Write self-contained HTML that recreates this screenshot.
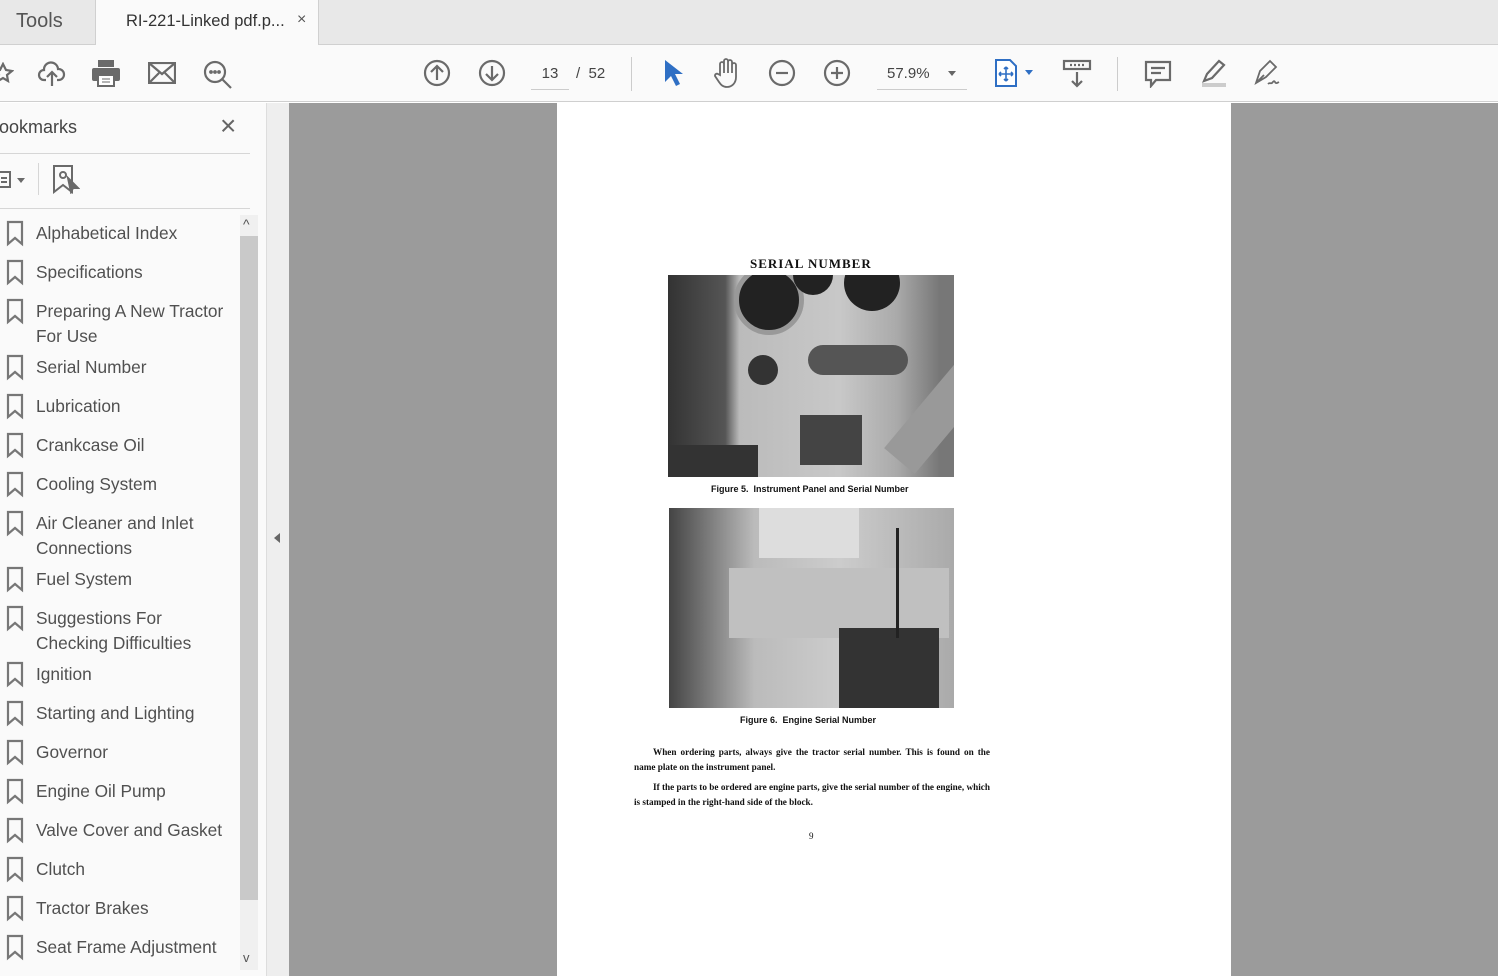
<!DOCTYPE html>
<html><head><meta charset="utf-8"><style>
*{margin:0;padding:0;box-sizing:border-box}
body{width:1498px;height:976px;overflow:hidden;position:relative;font-family:"Liberation Sans",sans-serif;background:#fff}
.abs{position:absolute}
#tabs{left:0;top:0;width:1498px;height:45px;background:#e8e8e8;border-bottom:1px solid #d0d0d0}
#toolbar{left:0;top:45px;width:1498px;height:57px;background:#fafafa;border-bottom:1px solid #cfcfcf}
.ic{position:absolute;fill:none;stroke:#6a6a6a;stroke-width:2.2}
.bm{position:absolute;left:36px;font-size:17.3px;color:#505050;line-height:25px}
</style></head><body>
<div id="tabs" class="abs">
 <div class="abs" style="left:16px;top:10px;font-size:20px;color:#555">Tools</div>
 <div class="abs" style="left:95px;top:0;width:224px;height:46px;background:#fafafa;border-left:1px solid #d0d0d0;border-right:1px solid #d0d0d0"></div>
 <div class="abs" style="left:126px;top:12px;font-size:16.5px;color:#333">RI-221-Linked pdf.p...</div>
 <div class="abs" style="left:297px;top:11px;font-size:16px;color:#555">×</div>
</div>
<div id="toolbar" class="abs">
 <svg class="ic" style="left:-8px;top:17px" width="22" height="22" viewBox="0 0 22 22"><path d="M11 2l3 6 6 1-5 4 1 6-5-3-5 3 1-6-5-4 6-1z"/></svg>
 <svg class="ic" style="left:37px;top:14px" width="30" height="30" viewBox="0 0 30 30"><path d="M9 21H7a5 5 0 0 1 0-10 7 7 0 0 1 14-1 5 5 0 0 1 1 11h-2M15 27V14M10 18l5-5 5 5"/></svg>
 <svg style="position:absolute;left:91px;top:14px" width="30" height="28" viewBox="0 0 30 28"><rect x="7" y="1" width="16" height="7" fill="#6a6a6a"/><rect x="1" y="9" width="28" height="13" rx="2" fill="#6a6a6a"/><rect x="7" y="16" width="16" height="11" fill="#fff" stroke="#6a6a6a" stroke-width="2"/><path d="M11 20h8M11 23h8" stroke="#6a6a6a"/></svg>
 <svg class="ic" style="left:148px;top:17px" width="28" height="22" viewBox="0 0 28 22"><rect x="1" y="1" width="26" height="20"/><path d="M1 1l13 11L27 1M1 21l10-10M27 21L17 11"/></svg>
 <svg class="ic" style="left:202px;top:14px" width="32" height="32" viewBox="0 0 32 32"><circle cx="13" cy="13" r="10"/><path d="M20 20l9 9"/><circle cx="9" cy="13" r=".8" fill="#6a6a6a"/><circle cx="13" cy="13" r=".8" fill="#6a6a6a"/><circle cx="17" cy="13" r=".8" fill="#6a6a6a"/></svg>
 <svg class="ic" style="left:423px;top:14px" width="28" height="28" viewBox="0 0 28 28"><circle cx="14" cy="14" r="12"/><path d="M14 21V7M8 13l6-6 6 6"/></svg>
 <svg class="ic" style="left:478px;top:14px" width="28" height="28" viewBox="0 0 28 28"><circle cx="14" cy="14" r="12"/><path d="M14 7v14M8 15l6 6 6-6"/></svg>
 <div class="abs" style="left:531px;top:20px;width:38px;text-align:center;font-size:15px;color:#444">13</div>
 <div class="abs" style="left:531px;top:44px;width:38px;height:1px;background:#ccc"></div>
 <div class="abs" style="left:576px;top:20px;font-size:15px;color:#444">/ &nbsp;52</div>
 <div class="abs" style="left:631px;top:12px;width:1px;height:34px;background:#ccc"></div>
 <svg style="position:absolute;left:663px;top:13px" width="20" height="30" viewBox="0 0 20 30"><path d="M2 2v22l6-6 5 10 4-2-5-10h8z" fill="#2f6fc4"/></svg>
 <svg class="ic" style="left:712px;top:12px;stroke-width:1.8" width="30" height="32" viewBox="0 0 30 32"><path d="M8 18V7a2 2 0 0 1 4 0v9V4a2 2 0 0 1 4 0v12V5a2 2 0 0 1 4 0v11V8a2 2 0 0 1 4 0v12c0 6-4 10-9 10-4 0-6-2-8-5l-4-6a2 2 0 0 1 3-2z"/></svg>
 <svg class="ic" style="left:768px;top:14px" width="28" height="28" viewBox="0 0 28 28"><circle cx="14" cy="14" r="12"/><path d="M8 14h12"/></svg>
 <svg class="ic" style="left:823px;top:14px" width="28" height="28" viewBox="0 0 28 28"><circle cx="14" cy="14" r="12"/><path d="M8 14h12M14 8v12"/></svg>
 <div class="abs" style="left:887px;top:20px;font-size:15px;color:#444">57.9%</div>
 <div class="abs" style="left:948px;top:26px;border:4px solid transparent;border-top:5px solid #666"></div>
 <div class="abs" style="left:877px;top:44px;width:90px;height:1px;background:#ccc"></div>
 <svg style="position:absolute;left:994px;top:13px" width="40" height="30" viewBox="0 0 40 30"><path d="M2 2h14l6 6v20H2z" fill="#fff" stroke="#2f6fc4" stroke-width="2"/><path d="M12 9v14M5 16h14M12 9l-2 2M12 9l2 2M12 23l-2-2M12 23l2-2M5 16l2-2M5 16l2 2M19 16l-2-2M19 16l-2 2" stroke="#2f6fc4" stroke-width="1.6" fill="none"/><path d="M31 12h8l-4 5z" fill="#2f6fc4"/></svg>
 <svg class="ic" style="left:1062px;top:14px" width="30" height="30" viewBox="0 0 30 30"><rect x="2" y="2" width="26" height="8"/><path d="M15 13v14M10 22l5 5 5-5"/><path d="M8 6h14" stroke-dasharray="2 2"/></svg>
 <div class="abs" style="left:1117px;top:12px;width:1px;height:34px;background:#ccc"></div>
 <svg class="ic" style="left:1144px;top:15px" width="28" height="28" viewBox="0 0 28 28"><path d="M2 2h24v18H12l-5 6v-6H2z"/><path d="M7 8h14M7 13h10"/></svg>
 <svg class="ic" style="left:1198px;top:12px" width="32" height="32" viewBox="0 0 32 32"><path d="M6 24l3-7 12-13 5 4-12 13z"/><path d="M4 28h24" stroke="#ccc" stroke-width="4"/></svg>
 <svg class="ic" style="left:1252px;top:12px;stroke-width:1.8" width="32" height="32" viewBox="0 0 32 32"><path d="M4 26l4-12 10-10 6 6-10 10zM4 26l8-8M16 27c2-2 3 0 4-1s2-3 3-1 2 1 4 0"/></svg>
</div>
<div class="abs" style="left:0;top:103px;width:266px;height:873px;background:#fafafa"></div>
<div class="abs" style="left:-1px;top:117px;font-size:18px;color:#444">ookmarks</div>
<div class="abs" style="left:220px;top:110px;font-size:28px;color:#666">×</div>
<div class="abs" style="left:0;top:153px;width:250px;height:1px;background:#d6d6d6"></div>
<svg class="ic" style="left:-2px;top:170px;stroke-width:2" width="32" height="20" viewBox="0 0 32 20"><rect x="0" y="2" width="12" height="15"/><path d="M3 8h6M3 12h6"/><path d="M19 8h8l-4 5z" fill="#6a6a6a" stroke="none"/></svg>
<div class="abs" style="left:38px;top:163px;width:1px;height:32px;background:#d6d6d6"></div>
<svg class="ic" style="left:52px;top:164px;stroke-width:2" width="28" height="30" viewBox="0 0 28 30"><path d="M2 2h18v26l-9-7-9 7z"/><circle cx="11" cy="11" r="3"/><path d="M16 14l10 10h-5l-2 4z" fill="#6a6a6a"/></svg>
<div class="abs" style="left:0;top:208px;width:250px;height:1px;background:#d6d6d6"></div>
<div class="abs" style="left:240px;top:215px;width:18px;height:755px;background:#f0f0f0"></div>
<div class="abs" style="left:240px;top:236px;width:18px;height:664px;background:#c9c9c9"></div>
<div class="abs" style="left:243px;top:216px;font-size:14px;color:#555">^</div>
<div class="abs" style="left:243px;top:950px;font-size:13px;color:#555">v</div>
<div class="abs" style="left:266px;top:103px;width:23px;height:873px;background:#eeeeee;border-left:1px solid #ddd"></div>
<div class="abs" style="left:274px;top:533px;border:5px solid transparent;border-right:6px solid #666;border-left:0"></div>

<svg style="position:absolute;left:0;top:0" width="30" height="976">
<defs><path id="b" d="M8 0h14v22l-7-6-7 6z" fill="none" stroke="#777" stroke-width="2.2"/></defs>
<use href="#b" y="222"/><use href="#b" y="261"/><use href="#b" y="300"/><use href="#b" y="356" style="stroke:#444"/><use href="#b" y="395"/><use href="#b" y="434"/><use href="#b" y="473"/><use href="#b" y="512"/><use href="#b" y="568"/><use href="#b" y="607"/><use href="#b" y="663"/><use href="#b" y="702"/><use href="#b" y="741"/><use href="#b" y="780"/><use href="#b" y="819"/><use href="#b" y="858"/><use href="#b" y="897"/><use href="#b" y="936"/>
</svg>
<div class="bm" style="top:221px">Alphabetical Index</div>
<div class="bm" style="top:260px">Specifications</div>
<div class="bm" style="top:299px">Preparing A New Tractor<br>For Use</div>
<div class="bm" style="top:355px">Serial Number</div>
<div class="bm" style="top:394px">Lubrication</div>
<div class="bm" style="top:433px">Crankcase Oil</div>
<div class="bm" style="top:472px">Cooling System</div>
<div class="bm" style="top:511px">Air Cleaner and Inlet<br>Connections</div>
<div class="bm" style="top:567px">Fuel System</div>
<div class="bm" style="top:606px">Suggestions For<br>Checking Difficulties</div>
<div class="bm" style="top:662px">Ignition</div>
<div class="bm" style="top:701px">Starting and Lighting</div>
<div class="bm" style="top:740px">Governor</div>
<div class="bm" style="top:779px">Engine Oil Pump</div>
<div class="bm" style="top:818px">Valve Cover and Gasket</div>
<div class="bm" style="top:857px">Clutch</div>
<div class="bm" style="top:896px">Tractor Brakes</div>
<div class="bm" style="top:935px">Seat Frame Adjustment</div>

<div class="abs" style="left:289px;top:103px;width:1209px;height:873px;background:#9b9b9b"></div>
<div class="abs" style="left:557px;top:103px;width:674px;height:873px;background:#fff"></div>
<div class="abs" style="left:750px;top:256px;font-family:'Liberation Serif',serif;font-weight:bold;font-size:13px;color:#111;letter-spacing:1px">SERIAL NUMBER</div>
<div class="abs" style="left:668px;top:275px;width:286px;height:202px;background:linear-gradient(90deg,#333 0,#555 20%,#bbb 25%,#c8c8c8 60%,#aaa 80%,#777 95%);overflow:hidden">
 <div class="abs" style="left:66px;top:-10px;width:70px;height:70px;border-radius:50%;background:#222;border:5px solid #999"></div>
 <div class="abs" style="left:176px;top:-20px;width:56px;height:56px;border-radius:50%;background:#222"></div>
 <div class="abs" style="left:125px;top:-20px;width:40px;height:40px;border-radius:50%;background:#222"></div>
 <div class="abs" style="left:80px;top:80px;width:30px;height:30px;border-radius:50%;background:#333"></div>
 <div class="abs" style="left:140px;top:70px;width:100px;height:30px;border-radius:15px;background:#555"></div>
 <div class="abs" style="left:132px;top:140px;width:62px;height:50px;background:#444"></div>
 <div class="abs" style="left:210px;top:120px;width:120px;height:40px;background:#999;transform:rotate(-50deg)"></div>
 <div class="abs" style="left:0;top:170px;width:90px;height:32px;background:#333"></div>
</div>
<div class="abs" style="left:711px;top:484px;font-weight:bold;font-size:9px;color:#111">Figure 5. &nbsp;Instrument Panel and Serial Number</div>
<div class="abs" style="left:669px;top:508px;width:285px;height:200px;background:linear-gradient(90deg,#444 0,#bbb 30%,#ccc 60%,#aaa 100%);overflow:hidden">
 <div class="abs" style="left:90px;top:0;width:100px;height:50px;background:#ddd"></div>
 <div class="abs" style="left:60px;top:60px;width:220px;height:70px;background:#c0c0c0"></div>
 <div class="abs" style="left:170px;top:120px;width:100px;height:80px;background:#333"></div>
 <div class="abs" style="left:200px;top:20px;width:30px;height:110px;border-right:3px solid #222"></div>
</div>
<div class="abs" style="left:740px;top:715px;font-weight:bold;font-size:9px;color:#111">Figure 6. &nbsp;Engine Serial Number</div>
<div class="abs" style="left:634px;top:745px;width:356px;font-family:'Liberation Serif',serif;font-weight:bold;font-size:9.2px;line-height:15px;color:#111;text-align:justify;text-indent:19px">When ordering parts, always give the tractor serial number. This is found on the name plate on the instrument panel.</div>
<div class="abs" style="left:634px;top:780px;width:356px;font-family:'Liberation Serif',serif;font-weight:bold;font-size:9.2px;line-height:15px;color:#111;text-align:justify;text-indent:19px">If the parts to be ordered are engine parts, give the serial number of the engine, which is stamped in the right-hand side of the block.</div>
<div class="abs" style="left:809px;top:831px;font-family:'Liberation Serif',serif;font-size:9px;color:#111">9</div>
</body></html>
